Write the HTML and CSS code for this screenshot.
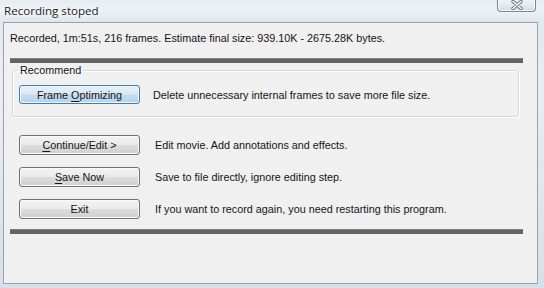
FILE: index.html
```html
<!DOCTYPE html>
<html>
<head>
<meta charset="utf-8">
<link rel="stylesheet" href="styles.css">
</head>
<body>
<div class="window">
  <div class="titlebar">
    <span class="title">Recording stoped</span>
    <span class="close">
      <svg width="14" height="10" viewBox="0 0 14 10">
        <path d="M3 1.5 L11 8.5 M11 1.5 L3 8.5" stroke="#6a7684" stroke-width="3.4" stroke-linecap="round"/>
        <path d="M3 1.5 L11 8.5 M11 1.5 L3 8.5" stroke="#ffffff" stroke-width="1.6" stroke-linecap="round"/>
      </svg>
    </span>
  </div>
  <div class="client">
    <div class="status">Recorded, 1m:51s, 216 frames. Estimate final size: 939.10K - 2675.28K bytes.</div>
    <div class="bar"></div>
    <fieldset class="group">
      <legend>Recommend</legend>
      <div class="row first">
        <button class="btn default">Frame <u>O</u>ptimizing</button>
        <span class="desc">Delete unnecessary internal frames to save more file size.</span>
      </div>
    </fieldset>
    <div class="actions">
      <div class="row">
        <button class="btn"><u>C</u>ontinue/Edit &gt;</button>
        <span class="desc">Edit movie. Add annotations and effects.</span>
      </div>
      <div class="row">
        <button class="btn"><u>S</u>ave Now</button>
        <span class="desc">Save to file directly, ignore editing step.</span>
      </div>
      <div class="row">
        <button class="btn">Exit</button>
        <span class="desc">If you want to record again, you need restarting this program.</span>
      </div>
    </div>
    <div class="bar bottom"></div>
  </div>
</div>
</body>
</html>
```

FILE: styles.css
```css
html, body {
  margin: 0;
  padding: 0;
}
body {
  width: 544px;
  height: 288px;
  overflow: hidden;
  background: linear-gradient(180deg, #dfe7ee 0%, #e9eef2 30%, #d7e0e8 100%);
  font-family: "Liberation Sans", Arial, sans-serif;
  font-size: 10.8px;
  color: #151515;
}
.window {
  height: 288px;
  display: flex;
  flex-direction: column;
}
.titlebar {
  height: 22px;
  display: flex;
  justify-content: space-between;
  align-items: flex-start;
  padding-left: 4px;
  padding-right: 8px;
  background: linear-gradient(180deg, #e6edf3 0%, #eef2f5 50%, #dde5ec 100%);
}
.title {
  font-family: "Open Sans", "Liberation Sans", sans-serif;
  font-size: 11.6px;
  line-height: 21px;
  color: #222;
  text-shadow: 0 0 6px #ffffff, 0 0 3px #ffffff;
}
.close {
  width: 37px;
  height: 12px;
  margin-top: -1px;
  border: 1px solid #7a8795;
  border-top: none;
  border-radius: 0 0 4px 4px;
  background: linear-gradient(180deg, #f1f4f7 0%, #e3e9ee 55%, #d3dce5 100%);
  display: flex;
  align-items: center;
  justify-content: center;
  box-shadow: inset 0 0 0 1px rgba(255,255,255,0.7);
}
.close svg {
  display: block;
}
.client {
  height: 260px;
  margin: 0 6px 0 3px;
  border: 1px solid #97a3ae;
  background: #f0f0f0;
  display: flex;
  flex-direction: column;
}
.status {
  padding: 8px 0 0 6px;
  line-height: 15px;
  height: 15px;
}
.bar {
  height: 5px;
  margin: 12px 14px 0 6px;
  background: #636363;
  border-top: 1px solid #808080;
  box-sizing: border-box;
}
.bar.bottom {
  margin-top: 10px;
}
.group {
  margin: 0 18px 0 8px;
  padding: 0 0 12px 0;
  border: 1px solid #d8d8d8;
  border-radius: 3px;
  box-shadow: inset 1px 1px 0 #ffffff, 1px 1px 0 #ffffff;
  min-width: 0;
}
.group legend {
  margin-left: 5px;
  padding: 0 2px;
  line-height: 14px;
}
.row {
  display: flex;
  align-items: center;
  gap: 15px;
}
.row.first {
  margin: 8px 0 0 6px;
  gap: 13px;
}
.actions {
  margin: 18px 0 0 15px;
  display: flex;
  flex-direction: column;
  gap: 12px;
}
.btn {
  width: 121px;
  height: 20px;
  padding: 0;
  margin: 0;
  font: inherit;
  color: #151515;
  border: 1px solid #707070;
  border-radius: 3px;
  background: linear-gradient(180deg, #f3f3f3 0%, #ebebeb 48%, #dddddd 52%, #cfcfcf 100%);
  box-shadow: inset 0 0 0 1px #fafafa;
}
.btn.default {
  height: 19px;
  border-color: #3c7fb1;
  background: linear-gradient(180deg, #e6f0f8 0%, #d9e8f4 48%, #c4dcee 52%, #b7d3ea 100%);
  box-shadow: inset 0 0 0 1px #eef6fc;
}
.btn u {
  text-decoration-thickness: 1px;
  text-underline-offset: 2px;
}
.desc {
  white-space: nowrap;
}
```
